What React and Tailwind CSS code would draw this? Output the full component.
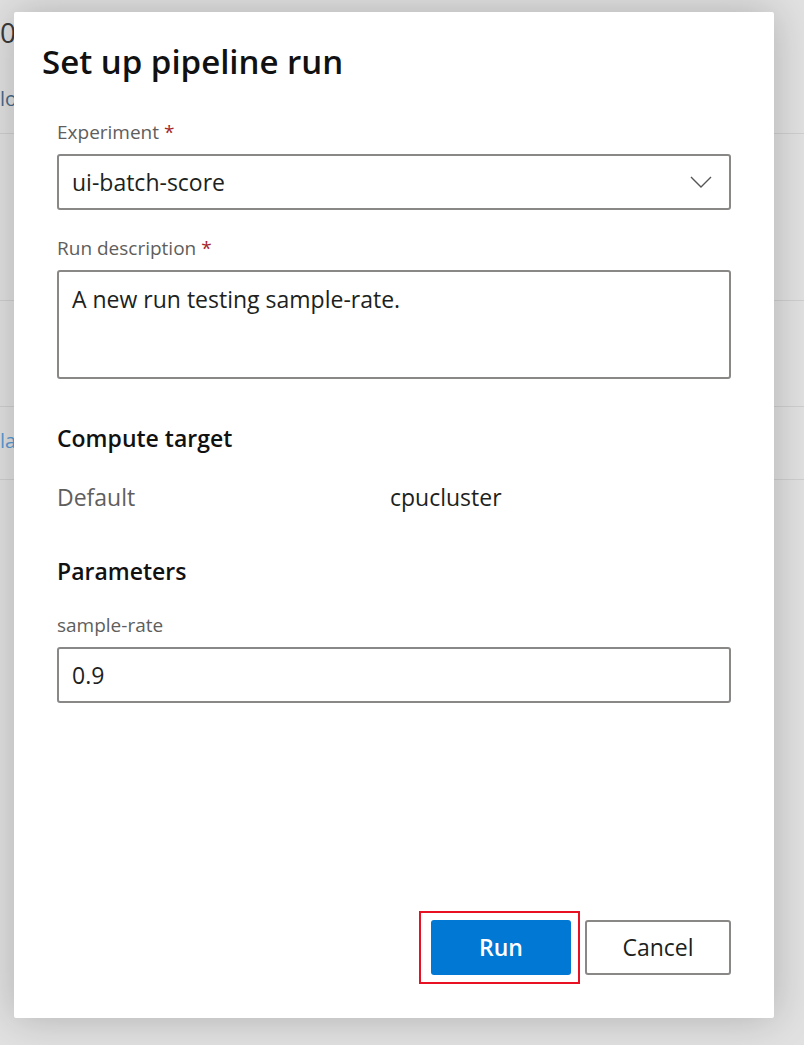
import React from 'react';

const font = { fontFamily: '"Open Sans", "Noto Sans", sans-serif' };

function Field({ label, required, children }) {
  return (
    <div className="flex flex-col">
      <label className="text-[19px] leading-[24px] text-[#605e5c] mb-[10px]">
        {label}
        {required && <span className="text-[#a4262c]"> *</span>}
      </label>
      {children}
    </div>
  );
}

export default function App() {
  return (
    <div className="relative w-[804px] h-[1045px] overflow-hidden bg-[#e6e6e6]" style={font}>
      {/* page behind the dialog */}
      <div className="w-[804px] h-[1045px] bg-[#e1e1e1]">
        <div className="pt-[14px] text-[28px] leading-[36px] text-[#3a3a3a]">0-</div>
        <div className="mt-[37px] text-[20px] leading-[24px] text-[#4a6a8a]">lo</div>
        <div className="mt-[22px] border-t border-[#cfcfcf]" />
        <div className="h-[166px]" />
        <div className="border-t border-[#cfcfcf]" />
        <div className="h-[105px]" />
        <div className="border-t border-[#cfcfcf]" />
        <div className="mt-[22px] text-[20px] leading-[24px] text-[#5a9bd5]">la</div>
        <div className="mt-[26px] border-t border-[#cfcfcf]" />
      </div>

      {/* dialog */}
      <div className="absolute left-[14px] top-[12px] w-[760px] h-[1006px] bg-white rounded-[2px] shadow-[0_0_40px_rgba(0,0,0,0.22)] flex flex-col">
        <h1 className="pl-[28px] pt-[28px] text-[33px] leading-[44px] font-semibold text-[#111]">
          Set up pipeline run
        </h1>

        <div className="px-[43px] pt-[36px] flex flex-col">
          <Field label="Experiment" required>
            <div className="h-[56px] border-2 border-[#8a8886] rounded-[3px] flex items-center justify-between pl-[13px] pr-[17px]">
              <span className="text-[23px] text-[#201f1e]">ui-batch-score</span>
              <svg width="22" height="14" viewBox="0 0 22 14" fill="none">
                <path d="M1 2l10 10L21 2" stroke="#555" strokeWidth="1.4" />
              </svg>
            </div>
          </Field>

          <div className="mt-[26px]">
            <Field label="Run description" required>
              <div className="h-[109px] border-2 border-[#8a8886] rounded-[3px] pl-[13px] pt-[11px]">
                <span className="text-[23px] leading-[32px] text-[#201f1e]">A new run testing sample-rate.</span>
              </div>
            </Field>
          </div>

          <h2 className="mt-[44px] text-[23px] leading-[30px] font-semibold text-[#111]">Compute target</h2>
          <div className="mt-[29px] flex text-[23px] leading-[30px]">
            <span className="w-[333px] text-[#605e5c]">Default</span>
            <span className="text-[#201f1e]">cpucluster</span>
          </div>

          <h2 className="mt-[44px] text-[23px] leading-[30px] font-semibold text-[#111]">Parameters</h2>
          <div className="mt-[27px]">
            <Field label="sample-rate">
              <div className="h-[56px] border-2 border-[#8a8886] rounded-[3px] flex items-center pl-[13px]">
                <span className="text-[23px] text-[#201f1e]">0.9</span>
              </div>
            </Field>
          </div>
        </div>

        <div className="mt-auto mb-[43px] pr-[43px] flex justify-end items-center gap-[14px]">
          <div className="relative">
            <button className="w-[140px] h-[55px] bg-[#0078d4] rounded-[3px] text-white text-[23px] font-semibold">
              Run
            </button>
            <div className="absolute -left-[12px] -top-[9px] -right-[9px] -bottom-[9px] border-2 border-[#e81123]" />
          </div>
          <button className="w-[146px] h-[55px] bg-white border-2 border-[#8a8886] rounded-[3px] text-[#201f1e] text-[23px]">
            Cancel
          </button>
        </div>
      </div>
    </div>
  );
}
